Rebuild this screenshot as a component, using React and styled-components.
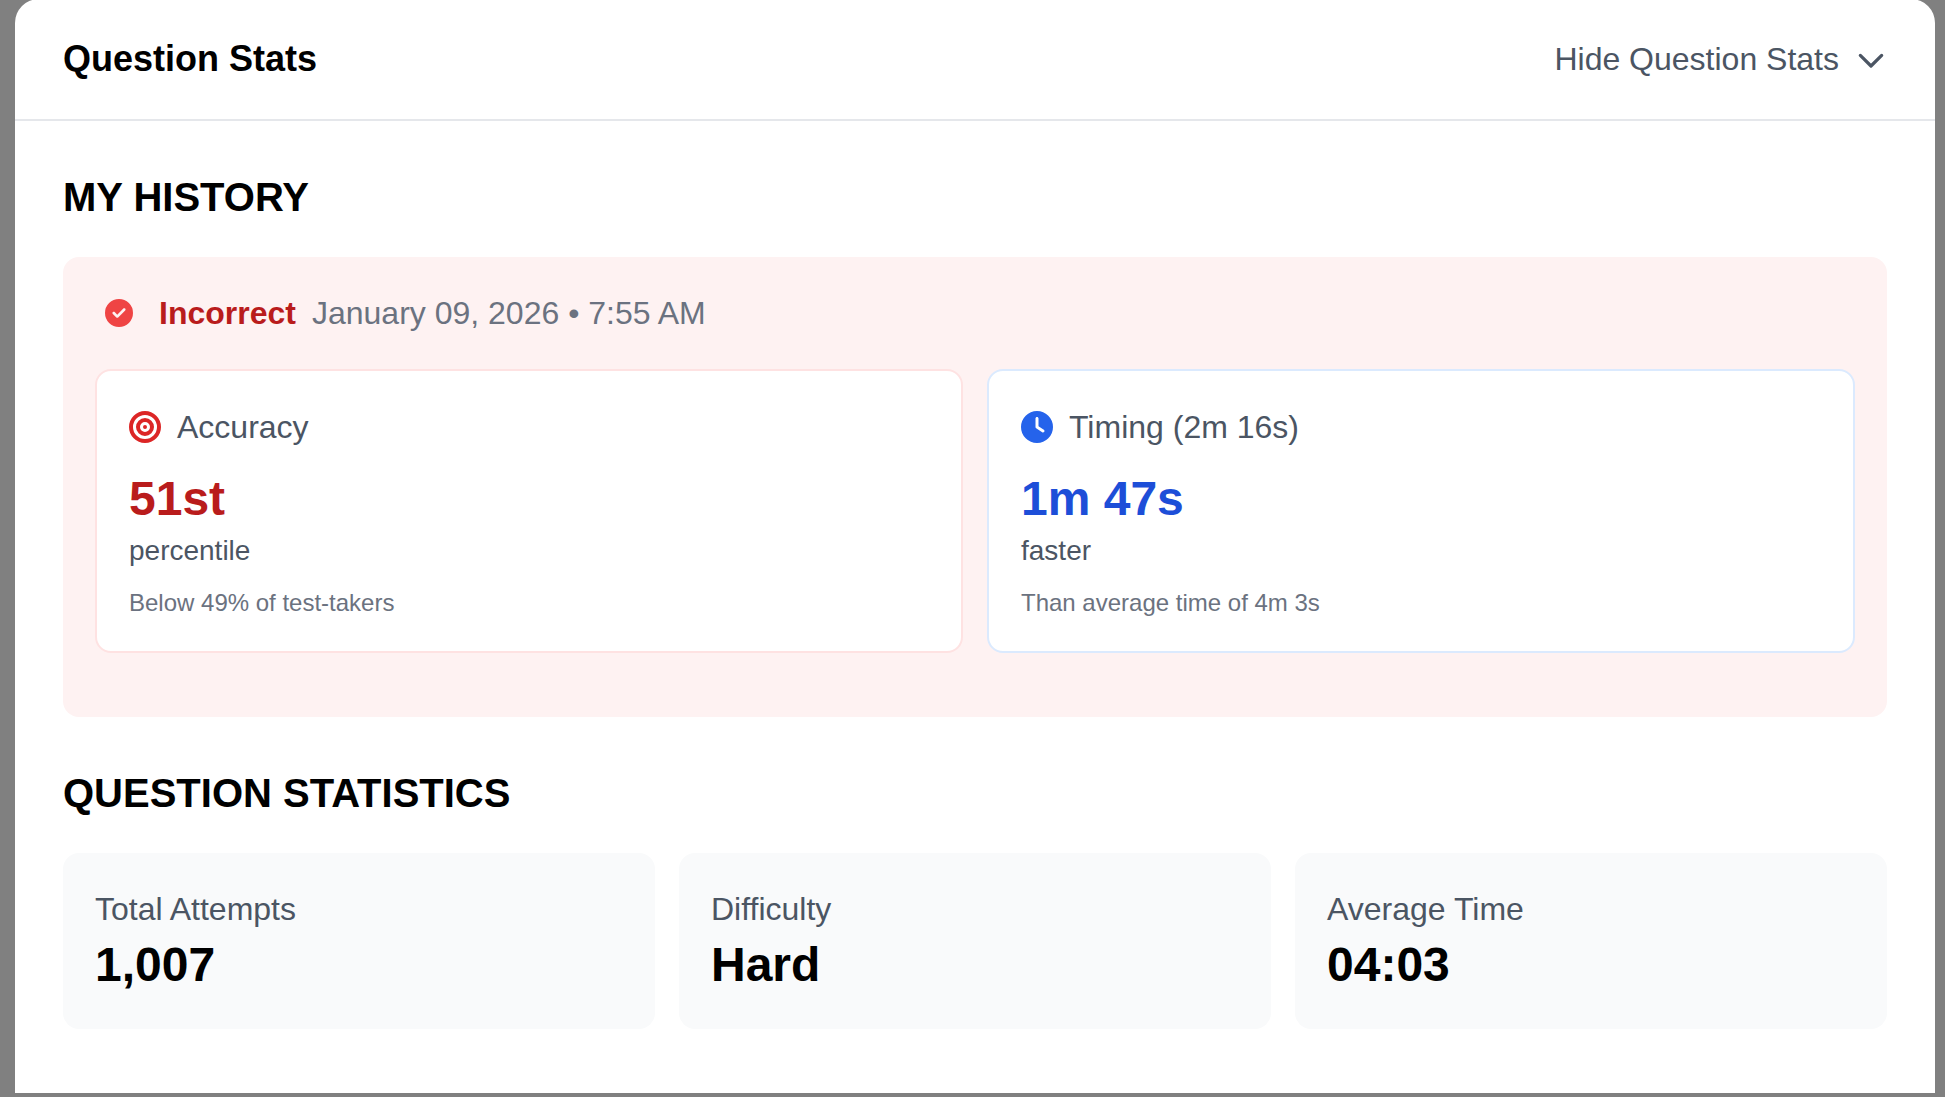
import React, { useState } from 'react'
import styled, { createGlobalStyle } from 'styled-components'
import { FaBullseye, FaCircleCheck, FaClock } from 'react-icons/fa6'

const GlobalStyle = createGlobalStyle`
  * {
    box-sizing: border-box;
  }
  body {
    margin: 0;
    background-color: #808080;
    color: #000000;
    font-family: Arial, "Liberation Sans", sans-serif;
    font-size: 32px;
    line-height: 48px;
  }
`
const Page = styled.div`
  display: flow-root;
  padding: 0 10px 4px 15px;
`
const Panel = styled.main`
  margin-top: -1px;
  background-color: #ffffff;
  border-radius: 24px 24px 0 0;
`
const Header = styled.header`
  display: flex;
  align-items: center;
  justify-content: space-between;
  padding: 32px 48px;
  border-bottom: 2px solid #e5e7eb;
`
const Title = styled.h1`
  margin: 0;
  font-size: 36px;
  line-height: 56px;
`
const Toggle = styled.button`
  display: flex;
  align-items: center;
  gap: 16px;
  padding: 0;
  border: 0;
  background: none;
  color: #4b5563;
  font: inherit;
  cursor: pointer;
`
const Content = styled.div`
  display: flex;
  flex-direction: column;
  gap: 48px;
  padding: 48px 48px 64px;
`
const SectionTitle = styled.h2`
  margin: 0 0 32px;
  font-size: 40px;
  line-height: 56px;
  text-transform: uppercase;
`
const Attempt = styled.article`
  padding: 32px 32px 64px;
  border-radius: 16px;
  background-color: #fef2f2;
`
const Status = styled.div`
  display: flex;
  align-items: center;
  gap: 16px;
  margin-bottom: 32px;
`
const StatusIcon = styled.span`
  display: flex;
  align-items: center;
  justify-content: center;
  width: 48px;
  height: 48px;
  color: #ef4444;
`
const Result = styled.strong`
  color: #b91c1c;
`
const AttemptDate = styled.span`
  color: #6b7280;
`
const Grid = styled.div`
  display: grid;
  grid-template-columns: repeat(${({ $columns }) => $columns}, 1fr);
  gap: 24px;
`
const MetricFrame = styled.div`
  padding: 32px;
  border: 2px solid ${({ $border }) => $border};
  border-radius: 16px;
  background-color: #ffffff;
`
const MetricName = styled.div`
  display: flex;
  align-items: center;
  gap: 16px;
  margin-bottom: 16px;
  color: #4b5563;

  svg {
    color: ${({ $icon }) => $icon};
  }
`
const Value = styled.div`
  color: ${({ $color }) => $color || 'inherit'};
  font-size: 48px;
  font-weight: 700;
  line-height: 64px;
`
const Unit = styled.div`
  margin-bottom: 16px;
  color: #4b5563;
  font-size: 28px;
  line-height: 40px;
`
const Note = styled.div`
  color: #6b7280;
  font-size: 24px;
  line-height: 32px;
`
const StatFrame = styled.div`
  padding: 32px;
  border-radius: 16px;
  background-color: #f9fafb;
`
const StatName = styled.div`
  color: #4b5563;
`

const tones = {
  red: { border: '#fee2e2', icon: '#dc2626', value: '#b91c1c' },
  blue: { border: '#dbeafe', icon: '#2563eb', value: '#1d4ed8' }
}

const Chevron = () => (
  <svg width='32' height='32' viewBox='0 0 24 24' fill='none' aria-hidden='true'>
    <path
      d='M4 9.25l8 8 8-8'
      stroke='currentColor'
      strokeWidth='2.4'
      strokeLinecap='round'
      strokeLinejoin='round'
    />
  </svg>
)

const Metric = ({ tone, icon, name, value, unit, note }) => {
  const colors = tones[tone]

  return (
    <MetricFrame $border={colors.border}>
      <MetricName $icon={colors.icon}>
        {icon}
        <span>{name}</span>
      </MetricName>
      <Value $color={colors.value}>{value}</Value>
      <Unit>{unit}</Unit>
      <Note>{note}</Note>
    </MetricFrame>
  )
}

const Stat = ({ name, value }) => (
  <StatFrame>
    <StatName>{name}</StatName>
    <Value>{value}</Value>
  </StatFrame>
)

const App = () => {
  const [open, setOpen] = useState(true)

  return (
    <Page>
      <GlobalStyle />
      <Panel>
        <Header>
          <Title>Question Stats</Title>
          <Toggle type='button' aria-expanded={open} onClick={() => setOpen(!open)}>
            {open ? 'Hide' : 'Show'} Question Stats
            <Chevron />
          </Toggle>
        </Header>
        {open && (
          <Content>
            <section>
              <SectionTitle>My History</SectionTitle>
              <Attempt>
                <Status>
                  <StatusIcon><FaCircleCheck size={28} /></StatusIcon>
                  <Result>Incorrect</Result>
                  <AttemptDate>January 09, 2026 • 7:55 AM</AttemptDate>
                </Status>
                <Grid $columns={2}>
                  <Metric
                    tone='red'
                    icon={<FaBullseye size={32} />}
                    name='Accuracy'
                    value='51st'
                    unit='percentile'
                    note='Below 49% of test-takers'
                  />
                  <Metric
                    tone='blue'
                    icon={<FaClock size={32} />}
                    name='Timing (2m 16s)'
                    value='1m 47s'
                    unit='faster'
                    note='Than average time of 4m 3s'
                  />
                </Grid>
              </Attempt>
            </section>
            <section>
              <SectionTitle>Question Statistics</SectionTitle>
              <Grid $columns={3}>
                <Stat name='Total Attempts' value='1,007' />
                <Stat name='Difficulty' value='Hard' />
                <Stat name='Average Time' value='04:03' />
              </Grid>
            </section>
          </Content>
        )}
      </Panel>
    </Page>
  )
}

export default App
